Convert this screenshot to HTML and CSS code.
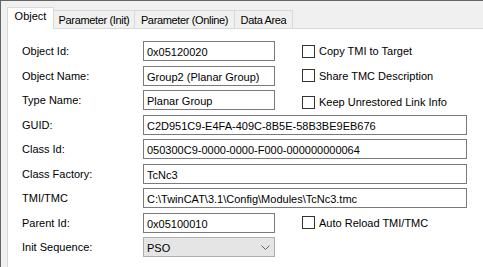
FILE: index.html
```html
<!DOCTYPE html>
<html>
<head>
	<meta charset="UTF-8">
	<title>Object</title>
	<link rel="stylesheet" href="styles.css">
</head>
<body>
<div class="window">
	<div class="tabs">
		<div class="tab active tab-object">Object</div>
		<div class="tab tab-init">Parameter (Init)</div>
		<div class="tab tab-online">Parameter (Online)</div>
		<div class="tab tab-data">Data Area</div>
	</div>
	<div class="panel">
		<div class="form">
			<div class="label">Object Id:</div>
			<div class="field">0x05120020</div>
			<div class="check"><span class="box"></span>Copy TMI to Target</div>

			<div class="label">Object Name:</div>
			<div class="field">Group2 (Planar Group)</div>
			<div class="check"><span class="box"></span>Share TMC Description</div>

			<div class="label">Type Name:</div>
			<div class="field">Planar Group</div>
			<div class="check check-low"><span class="box"></span>Keep Unrestored Link Info</div>

			<div class="label">GUID:</div>
			<div class="field wide">C2D951C9-E4FA-409C-8B5E-58B3BE9EB676</div>

			<div class="label">Class Id:</div>
			<div class="field wide">050300C9-0000-0000-F000-000000000064</div>

			<div class="label">Class Factory:</div>
			<div class="field wide">TcNc3</div>

			<div class="label">TMI/TMC</div>
			<div class="field wide">C:\TwinCAT\3.1\Config\Modules\TcNc3.tmc</div>

			<div class="label">Parent Id:</div>
			<div class="field">0x05100010</div>
			<div class="check"><span class="box"></span>Auto Reload TMI/TMC</div>

			<div class="label">Init Sequence:</div>
			<div class="combo">
				<span>PSO</span>
				<svg width="9" height="5" viewBox="0 0 9 5"><polyline points="0.5,0.5 4.5,4.5 8.5,0.5" fill="none" stroke="#606060" stroke-width="1"/></svg>
			</div>
		</div>
	</div>
</div>
</body>
</html>
```

FILE: styles.css
```css
body{
	margin: 0;
	background: #f0f0f0;
	font-family: "Liberation Sans", Arial, sans-serif;
	font-size: 11px;
	color: #000;
}
.window{
	height: 267px;
	box-sizing: border-box;
	border-top: 1px solid #646464;
	border-left: 1px solid #646464;
	padding-left: 6px;
	display: flex;
	flex-direction: column;
	overflow: hidden;
}
.tabs{
	height: 27px;
	display: flex;
	align-items: flex-end;
}
.tab{
	box-sizing: border-box;
	height: 18px;
	border-top: 1px solid #d9d9d9;
	border-right: 1px solid #d9d9d9;
	text-align: center;
	line-height: 18px;
	letter-spacing: -0.35px;
	white-space: nowrap;
}
.tab.active{
	height: 22px;
	border-left: 1px solid #d9d9d9;
	background: white;
	line-height: 17px;
	letter-spacing: 0;
	margin-bottom: -1px;
	position: relative;
	z-index: 1;
}
.tab-object{ width: 47px; }
.tab-init{ width: 81px; }
.tab-online{ width: 100px; }
.tab-data{ width: 58px; }

.panel{
	flex: 1;
	background: white;
	border-top: 1px solid #d9d9d9;
	border-left: 1px solid #d9d9d9;
	padding: 12px 0 0 14px;
}
.form{
	display: grid;
	grid-template-columns: 121px 132px 192px;
	grid-auto-rows: 20px;
	row-gap: 4.5px;
}
.label{
	grid-column: 1;
	line-height: 20px;
	white-space: nowrap;
}
.field{
	box-sizing: border-box;
	height: 20px;
	border: 1px solid #7a7a7a;
	padding: 1px 3px 0;
	line-height: 18px;
	white-space: nowrap;
	overflow: hidden;
}
.field.wide{
	grid-column: 2 / 4;
}
.check{
	display: flex;
	align-items: center;
	padding-left: 27px;
	line-height: 20px;
	white-space: nowrap;
}
.check-low{
	margin-top: 4px;
}
.box{
	width: 11px;
	height: 11px;
	border: 1px solid #333;
	background: white;
	margin-right: 4px;
}
.combo{
	box-sizing: border-box;
	height: 20px;
	border: 1px solid #adadad;
	background: #e5e5e5;
	padding: 1px 4px 0 3px;
	line-height: 18px;
	display: flex;
	align-items: center;
	justify-content: space-between;
}
```
